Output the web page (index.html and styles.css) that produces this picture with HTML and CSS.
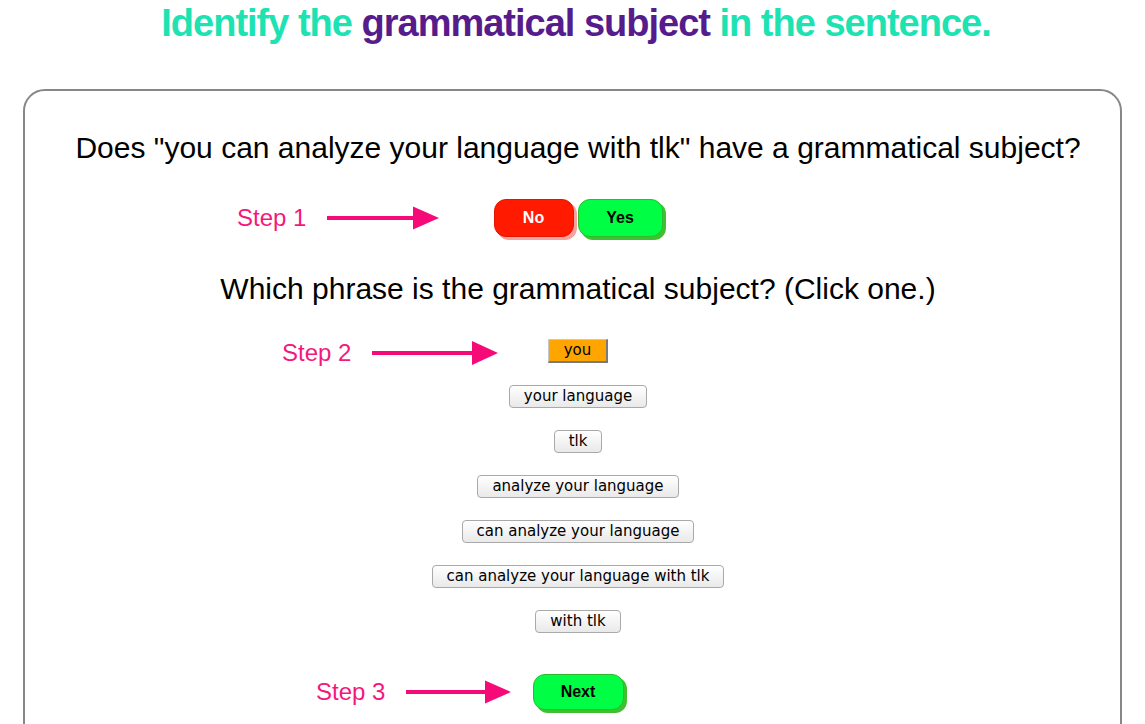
FILE: index.html
```html
<!DOCTYPE html>
<html>
<head>
<meta charset="utf-8">
<link rel="stylesheet" href="styles.css">
</head>
<body>
<h1 class="title"><span class="teal">Identify the </span><span class="purple">grammatical subject</span><span class="teal"> in the sentence.</span></h1>
<div class="card">
  <p class="question q1">Does "you can analyze your language with tlk" have a grammatical subject?</p>
  <div class="row row-yn">
    <div class="annot a1">
      <span class="step">Step 1</span>
      <svg class="arrow" width="112" height="24" viewBox="0 0 112 24"><rect x="0" y="10" width="87" height="4" fill="#f50a78"/><polygon points="86,0.5 112,12 86,23.5" fill="#f50a78"/></svg>
    </div>
    <button class="pill no">No</button>
    <button class="pill yes">Yes</button>
  </div>
  <p class="question q2">Which phrase is the grammatical subject? (Click one.)</p>
  <div class="phrases">
    <div class="row">
      <div class="annot a2">
        <span class="step">Step 2</span>
        <svg class="arrow" width="126" height="24" viewBox="0 0 126 24"><rect x="0" y="10" width="101" height="4" fill="#f50a78"/><polygon points="100,0 126,12 100,24" fill="#f50a78"/></svg>
      </div>
      <button class="phrase selected">you</button>
    </div>
    <div class="row"><button class="phrase">your language</button></div>
    <div class="row"><button class="phrase">tlk</button></div>
    <div class="row"><button class="phrase">analyze your language</button></div>
    <div class="row"><button class="phrase">can analyze your language</button></div>
    <div class="row"><button class="phrase">can analyze your language with tlk</button></div>
    <div class="row"><button class="phrase">with tlk</button></div>
  </div>
  <div class="row row-next">
    <div class="annot a3">
      <span class="step">Step 3</span>
      <svg class="arrow" width="105" height="24" viewBox="0 0 105 24"><rect x="0" y="10" width="80" height="4" fill="#f50a78"/><polygon points="79,0.5 105,12 79,23.5" fill="#f50a78"/></svg>
    </div>
    <button class="pill next">Next</button>
  </div>
</div>
</body>
</html>
```
FILE: styles.css
```css
html, body {
  margin: 0;
  padding: 0;
  background: #ffffff;
  font-family: "Liberation Sans", Arial, sans-serif;
  overflow: hidden;
}

.title {
  margin: 0;
  padding: 3px 0 0 7px;
  font-size: 38px;
  line-height: 40px;
  letter-spacing: -1px;
  font-weight: bold;
  text-align: center;
}

.teal { color: #1de2b2; }
.purple { color: #561c8c; }

.card {
  margin: 46px 23px 0 23px;
  padding: 0 0 0 11px;
  border: 2px solid #878787;
  border-radius: 22px;
  height: 700px;
}

.question {
  margin: 0;
  font-size: 30px;
  line-height: 34px;
  color: #000;
  text-align: center;
}

.q1 { margin-top: 40px; }
.q2 { margin-top: 35px; }

.row {
  position: relative;
  display: flex;
  justify-content: center;
  align-items: center;
  gap: 4px;
}

.row-yn { margin-top: 34px; height: 38px; }

.annot {
  position: absolute;
  top: 0;
  bottom: 0;
  display: flex;
  align-items: center;
  gap: 21px;
}
.a1 { left: 201px; }
.a2 { left: 246px; top: 2px; bottom: -2px; }
.a3 { left: 280px; }

.step {
  font-size: 24px;
  color: #f5187c;
  white-space: nowrap;
}

.arrow { display: block; }

.pill {
  font-family: "Liberation Sans", Arial, sans-serif;
  font-weight: bold;
  font-size: 16px;
  height: 38px;
  border-radius: 12px;
  padding: 0;
  cursor: pointer;
}

.no {
  width: 80px;
  background: #ff1a00;
  color: #ffffff;
  border: 1px solid #e21500;
  box-shadow: 3px 3px 0 #f6a3a0;
}

.yes {
  width: 85px;
  background: #00ff44;
  color: #000;
  border: 1px solid #2fb92f;
  box-shadow: 3px 3px 0 #3fc02e;
}

.next {
  width: 91px;
  height: 36px;
  background: #00ff44;
  color: #000;
  border: 1px solid #2fb92f;
  box-shadow: 3px 3px 0 #3fc02e;
}

.phrases {
  margin-top: 33px;
  display: flex;
  flex-direction: column;
  gap: 22px;
}

.phrase {
  font-family: "DejaVu Sans", sans-serif;
  font-size: 15px;
  line-height: 17px;
  height: 23px;
  padding: 0 14px;
  color: #000;
  background: linear-gradient(#ffffff, #f4f4f4 50%, #e9e9e9);
  border: 1px solid #a9a9a9;
  border-radius: 4px;
}

.phrase.selected {
  height: 24px;
  width: 60px;
  padding: 0;
  background: #ffa500;
  border-radius: 0;
  border-style: solid;
  border-width: 1px 2px 2px 1px;
  border-color: #c8c8c8 #7a7a7a #7a7a7a #c8c8c8;
}

.row-next { margin-top: 41px; height: 36px; }
```
